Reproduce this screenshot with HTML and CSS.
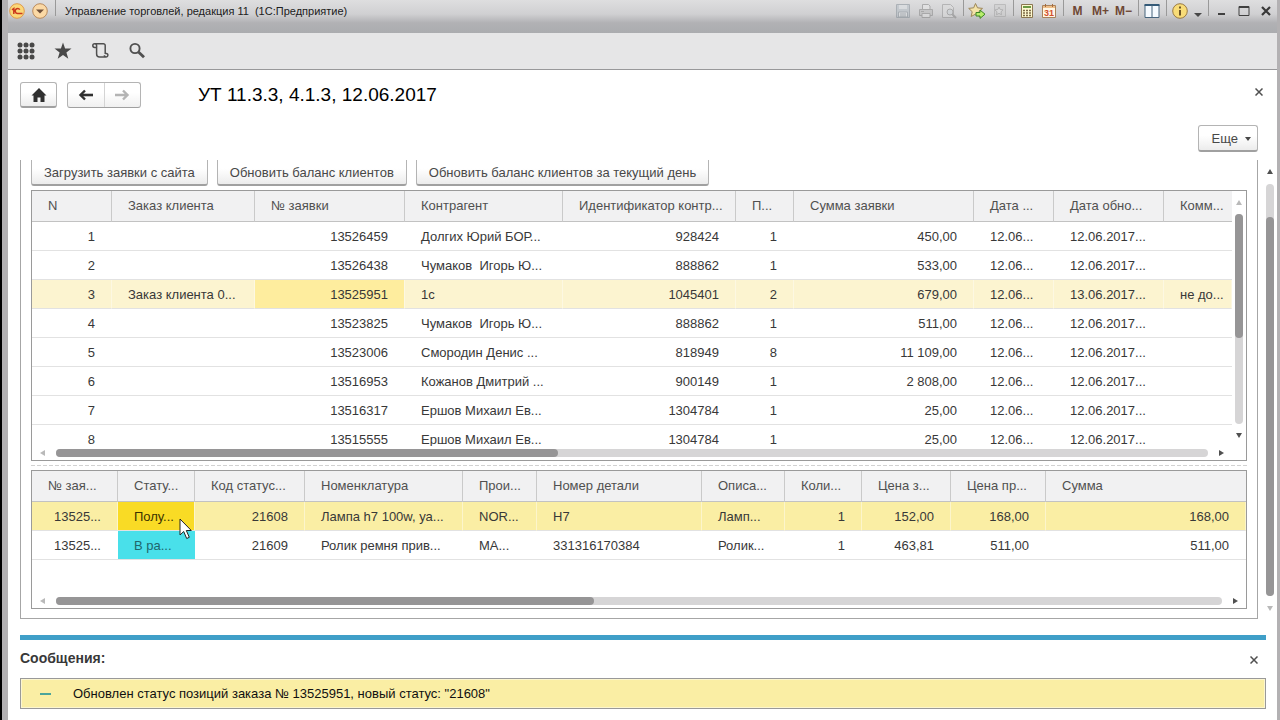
FILE: index.html
```html
<!DOCTYPE html>
<html lang="ru">
<head>
<meta charset="utf-8">
<title>Управление торговлей, редакция 11 (1С:Предприятие)</title>
<link rel="stylesheet" href="styles.css">
</head>
<body>
<div class="window">
  <header class="titlebar">
    <button class="round" aria-label="1С"><svg width="16" height="16" viewBox="0 0 16 16"><circle cx="8" cy="8" r="7.3" fill="#fbd878" stroke="#e09a4c"/><path d="M3 6.800 4.800 5.500V11M10.800 6.600A2.500 2.500 0 1 0 9 10.500H13.500" fill="none" stroke="#cc3a1d" stroke-width="1.500"/></svg></button>
    <button class="round" aria-label="Главное меню"><svg width="16" height="16" viewBox="0 0 16 16"><circle cx="8" cy="8" r="7.3" fill="#fbd9a5" stroke="#b98a5c"/><path d="M4 6.500h8L8 10.500z" fill="#70513a"/></svg></button>
    <span class="sep lead"></span>
    <span class="caption">Управление торговлей, редакция 11&nbsp; (1С:Предприятие)</span>
    <div class="tools">
      <button class="tool mem faded" aria-label="Сохранить"><svg width="16" height="16" viewBox="0 0 16 16"><path d="M1.500 1.500h13v13h-13z" fill="#aeb9c2" stroke="#76828c"/><path d="M4 2h8v4H4z" fill="#dde3e7"/><path d="M3.500 9h9v5h-9z" fill="#e4e8ea" stroke="#76828c"/><path d="M5 11h6M5 13h6" stroke="#76828c"/></svg></button>
      <button class="tool mem faded" aria-label="Печать"><svg width="16" height="16" viewBox="0 0 16 16"><path d="M4.500 6V1.500h6L12 3v3" fill="#eee" stroke="#777"/><path d="M1.500 6.500h13v6h-13z" fill="#b5b5b5" stroke="#777"/><path d="M4 10.500h8v4H4z" fill="#e5e5e5" stroke="#777"/><path d="M3 8.500h3" stroke="#777"/></svg></button>
      <button class="tool mem faded" aria-label="Просмотр"><svg width="16" height="16" viewBox="0 0 16 16"><path d="M1.500 1.500h8l3 3v10h-11z" fill="#ddd" stroke="#888"/><circle cx="9" cy="9" r="3" fill="#ccd3d8" stroke="#777"/><path d="m11 11 4 4" stroke="#777" stroke-width="2"/></svg></button>
      <span class="sep"></span>
      <button class="tool" aria-label="В избранное"><svg width="18" height="18" viewBox="0 0 18 18"><path d="m7.500 1.500 2 4.300 5 .6-3.700 3.300 1 4.800-4.300-2.400-4.300 2.400 1-4.800L.7 6.400l5-.6z" fill="#f4e3a8" stroke="#9d8759"/><path d="M8 10.500h4V8l5 4.200-5 4.200V14H8z" fill="#b8ef6c" stroke="#3c8424"/></svg></button>
      <button class="tool faded" aria-label="Избранное"><svg width="16" height="16" viewBox="0 0 16 16"><path d="M3.500 1.500h11v12h-11z" fill="#ccc" stroke="#999"/><path d="m8 4 1.200 2.500 2.800.4-2 2 .5 2.800L8 10.400l-2.500 1.300.5-2.800-2-2 2.800-.4z" fill="#ddd" stroke="#888"/></svg></button>
      <span class="sep"></span>
      <button class="tool" aria-label="Калькулятор"><svg width="16" height="16" viewBox="0 0 16 16"><path d="M2.500 1.500h11v13h-11z" fill="#fdf8ce" stroke="#8b7750"/><path d="M4 3h8v2H4z" fill="#6b9a42"/><path d="M4 7.500h8M4 10h8M4 12.500h8" stroke="#7c6a48" stroke-width="1.500" stroke-dasharray="2 1"/></svg></button>
      <button class="tool" aria-label="Календарь"><svg width="16" height="16" viewBox="0 0 16 16"><path d="M1.500 2.500h13v12h-13z" fill="#fff7e6" stroke="#a9825c"/><path d="M2 3h12v2H2z" fill="#f0bf88"/><path d="M4.500 1v3M11.500 1v3" stroke="#a36c40"/><text x="8" y="13" text-anchor="middle" class="day">31</text></svg></button>
      <span class="sep"></span>
      <button class="tool mem">M</button>
      <button class="tool mem">M+</button>
      <button class="tool mem">M−</button>
      <span class="sep"></span>
      <button class="tool" aria-label="Панели"><svg width="16" height="16" viewBox="0 0 16 16"><path d="M1 2h14v12.500H1z" fill="#f5faff" stroke="#46647d"/><path d="M.5 2h15" stroke="#345a78" stroke-width="2"/><path d="M8 2v12" stroke="#46647d"/></svg></button>
      <span class="sep"></span>
      <button class="tool" aria-label="Справка"><svg width="16" height="16" viewBox="0 0 16 16"><circle cx="8" cy="8" r="7.300" fill="#f8dc78" stroke="#9a7a44"/><path d="M8 7v5.500M8 3.500v2" stroke="#6d5426" stroke-width="2"/></svg></button>
      <button class="tool slim" aria-label="Ещё"><svg width="8" height="8" viewBox="0 0 8 8"><path d="M0 3h8L4 7z" fill="#484848"/></svg></button>
      <span class="sep"></span>
      <button class="tool" aria-label="Свернуть"><svg width="12" height="12" viewBox="0 0 12 12"><path d="M2 9h7" stroke="#404040" stroke-width="2"/></svg></button>
      <button class="tool" aria-label="Развернуть"><svg width="12" height="12" viewBox="0 0 12 12"><path d="M1 1.500h10v9H1zM1 2.500h10" fill="none" stroke="#404040"/></svg></button>
      <button class="tool" aria-label="Закрыть окно"><svg width="12" height="12" viewBox="0 0 12 12"><path d="m2 2 8 8M10 2l-8 8" stroke="#383838" stroke-width="2.200"/></svg></button>
    </div>
  </header>

  <nav class="sections">
    <button aria-label="Функции"><svg width="18" height="18" viewBox="0 0 18 18" fill="#484848"><circle cx="3" cy="3" r="2.500"/><circle cx="9" cy="3" r="2.500"/><circle cx="15" cy="3" r="2.500"/><circle cx="3" cy="9" r="2.500"/><circle cx="9" cy="9" r="2.500"/><circle cx="15" cy="9" r="2.500"/><circle cx="3" cy="15" r="2.500"/><circle cx="9" cy="15" r="2.500"/><circle cx="15" cy="15" r="2.500"/></svg></button>
    <button aria-label="Избранное"><svg width="18" height="18" viewBox="0 0 18 18"><path d="m9 .5 2.100 6h6.400l-5.100 3.900 1.900 6.300L9 13l-5.300 3.700 1.900-6.300L.5 6.500h6.400z" fill="#484848"/></svg></button>
    <button aria-label="История"><svg width="18" height="18" viewBox="0 0 18 18" fill="none" stroke="#505050" stroke-width="1.500"><path d="M5 5.500H3.700a1.900 1.900 0 1 1 1.900-1.900V12a3 3 0 0 0 3 3h6.600M4 1.700h8.400a1.800 1.800 0 0 1 1.800 1.800V12M14.200 11.500h1a1.750 1.750 0 1 1-1.800 1.700"/></svg></button>
    <button aria-label="Поиск"><svg width="18" height="18" viewBox="0 0 18 18" fill="none" stroke="#505050"><circle cx="7" cy="6.500" r="4.600" stroke-width="1.900"/><path d="m10.500 10 5.500 5.300" stroke-width="2.800"/></svg></button>
  </nav>

  <main class="page">
    <div class="heading">
      <button class="btn icon" aria-label="Домой"><svg width="16" height="14" viewBox="0 0 16 14"><path d="M8 0 .5 7.500h2V14h4V9.500h3V14h4V7.500h2z" fill="#303030"/></svg></button>
      <div class="history">
        <button aria-label="Назад"><svg width="16" height="12" viewBox="0 0 16 12"><path d="M15 6H4" fill="none" stroke="#303030" stroke-width="2.600"/><path d="M7 1.500 2.500 6 7 10.500" fill="none" stroke="#303030" stroke-width="2.400"/></svg></button>
        <button aria-label="Вперёд"><svg width="16" height="12" viewBox="0 0 16 12"><path d="M1 6h11M9 1.500 13.500 6 9 10.500" fill="none" stroke="#b4b4b4" stroke-width="2.400"/></svg></button>
      </div>
      <h1>УТ 11.3.3, 4.1.3, 12.06.2017</h1>
      <button class="close" aria-label="Закрыть"><svg width="8" height="8" viewBox="0 0 8 8"><path d="m.5.5 7 7M7.500.5l-7 7" stroke="#505050" stroke-width="1.500"/></svg></button>
    </div>
    <div class="more"><button class="btn">Еще <svg width="6" height="4" viewBox="0 0 6 4"><path d="M0 0h6L3 4z" fill="#484848"/></svg></button></div>

    <div class="scroller">
      <section class="form">
        <div class="commands">
          <button class="btn">Загрузить заявки с сайта</button>
          <button class="btn">Обновить баланс клиентов</button>
          <button class="btn">Обновить баланс клиентов за текущий день</button>
        </div>

        <div class="grid orders">
          <div class="view">
            <div class="clip">
              <table>
                <colgroup><col class="w80"><col class="w143"><col class="w150"><col class="w158"><col class="w173"><col class="w58"><col><col class="w80"><col class="w110"><col class="w68"></colgroup>
                <thead><tr><th>N</th><th>Заказ клиента</th><th>№ заявки</th><th>Контрагент</th><th>Идентификатор контр...</th><th>П...</th><th>Сумма заявки</th><th>Дата ...</th><th>Дата обно...</th><th>Комм...</th></tr></thead>
                <tbody>
                  <tr><td class="n">1</td><td></td><td class="n">13526459</td><td>Долгих Юрий БОР...</td><td class="n">928424</td><td class="n">1</td><td class="n">450,00</td><td>12.06...</td><td>12.06.2017...</td><td></td></tr>
                  <tr><td class="n">2</td><td></td><td class="n">13526438</td><td>Чумаков&nbsp; Игорь Ю...</td><td class="n">888862</td><td class="n">1</td><td class="n">533,00</td><td>12.06...</td><td>12.06.2017...</td><td></td></tr>
                  <tr class="current"><td class="n">3</td><td>Заказ клиента 0...</td><td class="n cell">13525951</td><td>1с</td><td class="n">1045401</td><td class="n">2</td><td class="n">679,00</td><td>12.06...</td><td>13.06.2017...</td><td>не до...</td></tr>
                  <tr><td class="n">4</td><td></td><td class="n">13523825</td><td>Чумаков&nbsp; Игорь Ю...</td><td class="n">888862</td><td class="n">1</td><td class="n">511,00</td><td>12.06...</td><td>12.06.2017...</td><td></td></tr>
                  <tr><td class="n">5</td><td></td><td class="n">13523006</td><td>Смородин Денис ...</td><td class="n">818949</td><td class="n">8</td><td class="n">11 109,00</td><td>12.06...</td><td>12.06.2017...</td><td></td></tr>
                  <tr><td class="n">6</td><td></td><td class="n">13516953</td><td>Кожанов Дмитрий ...</td><td class="n">900149</td><td class="n">1</td><td class="n">2 808,00</td><td>12.06...</td><td>12.06.2017...</td><td></td></tr>
                  <tr><td class="n">7</td><td></td><td class="n">13516317</td><td>Ершов Михаил Ев...</td><td class="n">1304784</td><td class="n">1</td><td class="n">25,00</td><td>12.06...</td><td>12.06.2017...</td><td></td></tr>
                  <tr><td class="n">8</td><td></td><td class="n">13515555</td><td>Ершов Михаил Ев...</td><td class="n">1304784</td><td class="n">1</td><td class="n">25,00</td><td>12.06...</td><td>12.06.2017...</td><td></td></tr>
                </tbody>
              </table>
            </div>
            <div class="vbar"><i class="arrow up dim"></i><div class="track"><div class="thumb" style="height:59%"></div></div><i class="arrow down"></i></div>
          </div>
          <div class="hbar inset"><i class="arrow left dim"></i><div class="track"><div class="thumb" style="width:43.6%"></div></div><i class="arrow right"></i></div>
        </div>

        <div class="splitter"></div>

        <div class="grid items">
          <div class="view">
            <table>
              <colgroup><col class="w86"><col class="w77"><col class="w110"><col class="w158"><col class="w74"><col class="w165"><col class="w83"><col class="w77"><col class="w89"><col class="w95"><col></colgroup>
              <thead><tr><th>№ зая...</th><th>Стату...</th><th>Код статус...</th><th>Номенклатура</th><th>Прои...</th><th>Номер детали</th><th>Описа...</th><th>Коли...</th><th>Цена з...</th><th>Цена пр...</th><th>Сумма</th></tr></thead>
              <tbody>
                <tr class="marked"><td class="n">13525...</td><td class="gold">Полу...<svg class="pointer" width="14" height="22" viewBox="0 0 14 22"><path d="M1 1v16l3.700-3.500 3 7 2.600-1.200-3-6.800h5z" fill="#fff" stroke="#222"/></svg></td><td class="n">21608</td><td>Лампа h7 100w, уа...</td><td>NOR...</td><td>H7</td><td>Ламп...</td><td class="n">1</td><td class="n">152,00</td><td class="n">168,00</td><td class="n">168,00</td></tr>
                <tr><td class="n">13525...</td><td class="cyan">В ра...</td><td class="n">21609</td><td>Ролик ремня прив...</td><td>MA...</td><td>331316170384</td><td>Ролик...</td><td class="n">1</td><td class="n">463,81</td><td class="n">511,00</td><td class="n">511,00</td></tr>
              </tbody>
            </table>
          </div>
          <div class="hbar"><i class="arrow left dim"></i><div class="track"><div class="thumb" style="width:46.1%"></div></div><i class="arrow right"></i></div>
        </div>
      </section>
      <div class="vbar outer"><i class="arrow up"></i><div class="track"><div class="thumb low" style="height:92%"></div></div><i class="arrow down dim"></i></div>
    </div>

    <section class="messages">
      <div class="messages-head"><h2>Сообщения:</h2><button class="close" aria-label="Закрыть сообщения"><svg width="8" height="8" viewBox="0 0 8 8"><path d="m.5.5 7 7M7.500.5l-7 7" stroke="#505050" stroke-width="1.500"/></svg></button></div>
      <div class="message"><span class="dash"></span>Обновлен статус позиций заказа № 13525951, новый статус: "21608"</div>
    </section>
  </main>
</div>
</body>
</html>
```
FILE: styles.css
```css
* { box-sizing: border-box; }
body { margin: 0; font: 13px/16px "Liberation Sans", Arial, sans-serif; color: #383838; background: #000; }
button { font: inherit; color: inherit; margin: 0; padding: 0; border: 0; background: none; }
svg { display: block; }
h1, h2 { margin: 0; }

.window { display: flex; flex-direction: column; height: 100vh; margin-left: 2px; border: solid #b3b1b3; border-width: 0 3px 0 6px; background: #fff; overflow: hidden; }

.titlebar { display: flex; align-items: flex-start; flex: none; height: 33px; margin: 0 -3px 0 -6px; padding: 0 3px 0 6px; background: linear-gradient(#dededf 0, #d0d0d2 14px, #b1b1b4 23px, #abacaf 33px); }
.round { display: flex; justify-content: center; align-items: center; width: 23px; height: 22px; }
.round:first-child { width: 18px; margin-right: 2px; }
.sep { width: 6px; height: 16px; background: linear-gradient(#999, #999) center / 1px 100% no-repeat; }
.sep.lead { margin: 0 7px 0 1px; }
.caption { flex: 1; font-size: 11px; line-height: 22px; color: #202020; white-space: nowrap; }
.tools { display: flex; }
.tool { display: flex; justify-content: center; align-items: center; width: 22px; height: 22px; }
.tool.mem { width: 23px; font-weight: bold; font-size: 12px; color: #6e4734; }
.tool.slim { width: 14px; padding-top: 6px; }
.faded { opacity: .45; }
.day { font: bold 9px "Liberation Sans", Arial, sans-serif; fill: #d2502c; }

.sections { display: flex; align-items: center; flex: none; height: 37px; padding-left: 9px; gap: 19px; background: #e6e6e7; border-bottom: 1px solid #98989a; }

.page { display: flex; flex-direction: column; flex: 1; min-height: 0; }
.heading { display: flex; align-items: center; flex: none; padding: 12px 14px 0 12px; }
.btn { height: 27px; padding: 0 12px; border: 1px solid #b4b4b4; border-bottom: 2px solid #a0a0a0; border-radius: 3px; background: linear-gradient(#fff 40%, #ececec); color: #484848; white-space: nowrap; }
.btn.icon { display: flex; justify-content: center; align-items: center; width: 37px; height: 26px; padding: 0; }
.history { display: flex; width: 74px; height: 26px; margin-left: 10px; border: 1px solid #b4b4b4; border-bottom-color: #a0a0a0; border-radius: 3px; background: linear-gradient(#fff 40%, #f0f0f0); }
.history button { display: flex; flex: 1; justify-content: center; align-items: center; }
.history button + button { border-left: 1px solid #d4d4d4; }
h1 { flex: 1; margin-left: 57px; font-size: 19px; line-height: 24px; font-weight: normal; color: #000; }
.heading .close { margin-bottom: 6px; }
.more { display: flex; justify-content: flex-end; flex: none; padding: 17px 19px 8px; }
.more .btn { display: flex; align-items: center; gap: 7px; padding: 1px 6px 0 13px; }

.scroller { display: flex; flex: 1; min-height: 0; margin-left: 12px; }
.form { display: flex; flex-direction: column; flex: 1; min-width: 0; padding: 0 10px 9px; border: 1px solid #a6a6a6; border-top: 0; overflow: hidden; }
.commands { display: flex; flex: none; gap: 9px; height: 30px; overflow: hidden; }
.commands .btn { height: 29px; margin-top: -3px; padding-top: 3px; }

.grid { display: flex; flex-direction: column; border: 1px solid #9a9a9a; }
.orders { flex: 1; min-height: 0; }
.view { display: flex; flex: 1; min-height: 0; }
.clip { flex: 1; min-width: 0; overflow: hidden; }
.items { flex: none; min-height: 139px; }
table { width: 100%; table-layout: fixed; border-collapse: separate; border-spacing: 0; align-self: flex-start; }
th, td { padding: 0 0 0 16px; text-align: left; white-space: nowrap; border-bottom: 1px solid #e2e2e2; }
th { height: 31px; font-weight: normal; color: #505050; background: #f1f1f2; border-bottom-color: #c2c2c2; border-right: 1px solid #cacaca; }
th:last-child { border-right: 0; }
td { height: 29px; padding-top: 2px; }
.n { padding: 2px 17px 0 0; text-align: right; }
.current .n, .marked .n { padding-right: 16px; }
.current td { background: #fcf4d0; border-right: 1px solid #fdf8e2; }
.current .cell { background: #feed9e; }
.marked td { background: #faeea4; border-right: 1px solid #fcf5cb; }
.marked .gold { position: relative; background: #f9db25; color: #3c3200; }
.cyan { background: #49e0ea; color: #20666c; }
.pointer { position: absolute; left: 61px; top: 16px; z-index: 1; }
.w58 { width: 58px; } .w68 { width: 68px; } .w74 { width: 74px; } .w77 { width: 77px; }
.w80 { width: 80px; } .w83 { width: 83px; } .w86 { width: 86px; } .w89 { width: 89px; }
.w95 { width: 95px; } .w110 { width: 110px; } .w143 { width: 143px; } .w150 { width: 150px; }
.w158 { width: 158px; } .w165 { width: 165px; } .w173 { width: 173px; }

.hbar { display: flex; align-items: center; flex: none; height: 14px; padding: 0 8px; gap: 11px; }
.hbar.inset { padding-right: 22px; }
.track { flex: 1; border-radius: 4px; background: #d6d5d6; }
.hbar .track, .hbar .thumb { height: 8px; }
.thumb { border-radius: 4px; background: #969596; }
.vbar { display: flex; flex-direction: column; align-items: center; flex: none; width: 14px; padding: 9px 0 8px; gap: 9px; }
.vbar .track { display: flex; flex-direction: column; width: 8px; }
.vbar.outer { width: 8px; margin: 0 3px 0 8px; padding: 9px 0 8px; gap: 10px; }
.low { margin-top: auto; }
.arrow { width: 0; height: 0; border: 3px solid transparent; }
.arrow.up { border-top: 0; border-bottom: 5px solid #505050; }
.arrow.down { border-bottom: 0; border-top: 5px solid #505050; }
.arrow.left { border-left: 0; border-right: 5px solid #505050; }
.arrow.right { border-right: 0; border-left: 5px solid #505050; }
.arrow.dim { opacity: .4; }
.splitter { flex: none; height: 9px; background: repeating-linear-gradient(90deg, #d2d2d2 0 4px, #fff 4px 6px) center / 100% 1px no-repeat; }

.messages { flex: none; margin: 16px 11px 11px 12px; border-top: 5px solid #3f9fc8; }
.messages-head { display: flex; justify-content: space-between; align-items: center; height: 38px; padding: 0 8px 2px 0; }
h2 { font-size: 14px; line-height: 16px; }
.messages-head .close { padding-top: 3px; }
.message { display: flex; align-items: center; height: 31px; padding-left: 19px; border: 1px solid #999; background: #faeea4; color: #101010; box-shadow: inset 0 0 0 1px #fcf6d0; }
.dash { width: 11px; height: 2px; margin-right: 22px; background: #4ba59b; }
```
